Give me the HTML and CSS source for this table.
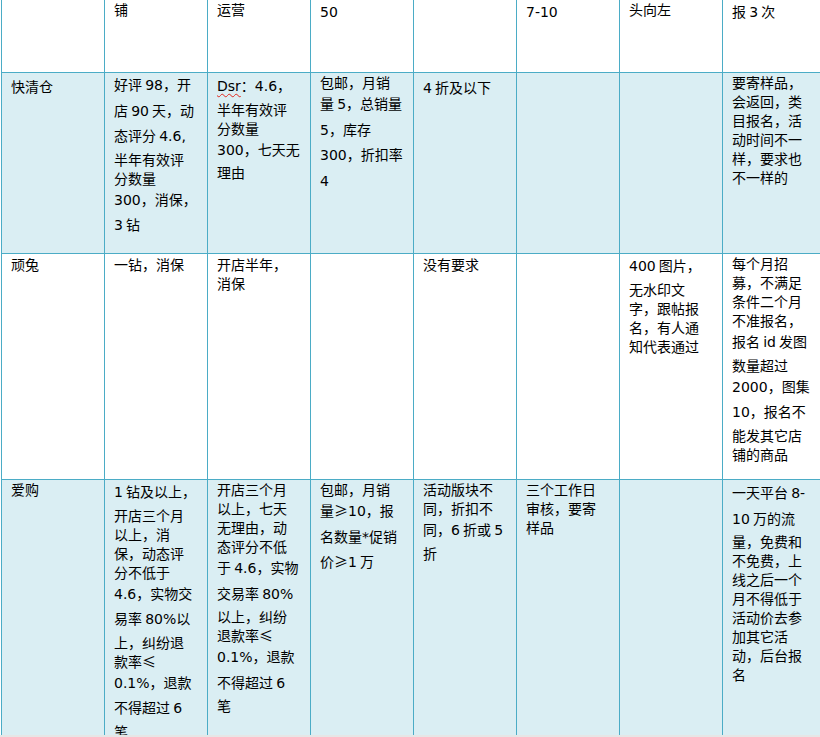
FILE: index.html
```html
<!DOCTYPE html>
<html lang="zh-CN">
<head>
<meta charset="utf-8">
<title>活动报名要求</title>
<link rel="stylesheet" href="styles.css">
</head>
<body>
<div class="page">
  <div class="sheet">
    <div class="row">
      <div class="cell"></div>
      <div class="cell">铺</div>
      <div class="cell">运营</div>
      <div class="cell"><span class="n">50</span></div>
      <div class="cell"></div>
      <div class="cell"><span class="n">7-10</span></div>
      <div class="cell">头向左</div>
      <div class="cell">报 <span class="n">3</span> 次</div>
    </div>
    <div class="row shade">
      <div class="cell pt4">快清仓</div>
      <div class="cell">好评 <span class="n">98</span>，开<br>店 <span class="n">90</span> 天，动<br>态评分 <span class="n">4.6,</span><br>半年有效评<br>分数量<br><span class="n">300</span>，消保，<br><span class="n">3</span> 钻</div>
      <div class="cell pt1"><span class="n spell">Dsr</span>：<span class="n">4.6</span>，<br>半年有效评<br>分数量<br><span class="n">300</span>，七天无<br>理由</div>
      <div class="cell">包邮，月销<br>量 <span class="n">5</span>，总销量<br><span class="n">5</span>，库存<br><span class="n">300</span>，折扣率<br><span class="n">4</span></div>
      <div class="cell pt3"><span class="n">4</span> 折及以下</div>
      <div class="cell"></div>
      <div class="cell"></div>
      <div class="cell">要寄样品，<br>会返回，类<br>目报名，活<br>动时间不一<br>样，要求也<br>不一样的</div>
    </div>
    <div class="row">
      <div class="cell pt1">顽兔</div>
      <div class="cell pt1">一钻，消保</div>
      <div class="cell pt1">开店半年，<br>消保</div>
      <div class="cell"></div>
      <div class="cell pt1">没有要求</div>
      <div class="cell"></div>
      <div class="cell"><span class="n">400</span> 图片，<br>无水印文<br>字，跟帖报<br>名，有人通<br>知代表通过</div>
      <div class="cell">每个月招<br>募，不满足<br>条件二个月<br>不准报名，<br>报名 <span class="n">id</span> 发图<br>数量超过<br><span class="n">2000</span>，图集<br><span class="n">10</span>，报名不<br>能发其它店<br>铺的商品</div>
    </div>
    <div class="row shade">
      <div class="cell">爱购</div>
      <div class="cell"><span class="n">1</span> 钻及以上，<br>开店三个月<br>以上，消<br>保，动态评<br>分不低于<br><span class="n">4.6</span>，实物交<br>易率 <span class="n">80%</span>以<br>上，纠纷退<br>款率≤<br><span class="n">0.1%</span>，退款<br>不得超过 <span class="n">6</span><br>笔</div>
      <div class="cell">开店三个月<br>以上，七天<br>无理由，动<br>态评分不低<br>于 <span class="n">4.6</span>，实物<br>交易率 <span class="n">80%</span><br>以上，纠纷<br>退款率≤<br><span class="n">0.1%</span>，退款<br>不得超过 <span class="n">6</span><br>笔</div>
      <div class="cell">包邮，月销<br>量≥<span class="n">10</span>，报<br>名数量<span class="n">*</span>促销<br>价≥<span class="n">1</span> 万</div>
      <div class="cell">活动版块不<br>同，折扣不<br>同，<span class="n">6</span> 折或 <span class="n">5</span><br>折</div>
      <div class="cell">三个工作日<br>审核，要寄<br>样品</div>
      <div class="cell"></div>
      <div class="cell pt1">一天平台 <span class="n">8-</span><br><span class="n">10</span> 万的流<br>量，免费和<br>不免费，上<br>线之后一个<br>月不得低于<br>活动价去参<br>加其它活<br>动，后台报<br>名</div>
    </div>
  </div>
</div>
</body>
</html>
```

FILE: styles.css
```css
* {
  box-sizing: border-box;
}

html,
body {
  margin: 0;
  overflow: hidden;
}

body {
  background: #e6e6e6;
  font-family: "Noto Sans CJK SC", sans-serif;
  font-size: 14px;
  color: #000;
}

.page {
  height: 735px;
  overflow: hidden;
  background: #fff;
}

.sheet {
  display: grid;
  grid-template-columns: 104px repeat(7, 103px);
  grid-template-rows: 73px 181px 226px 260px;
  width: 825px;
  margin-left: 1px;
}

.row {
  display: contents;
}

.cell {
  border-right: 1px solid #4bacc6;
  border-bottom: 1px solid #4bacc6;
  padding: 0 2px 0 9px;
  line-height: 19px;
  white-space: nowrap;
}

.cell:first-child {
  border-left: 1px solid #4bacc6;
}

.row.shade .cell {
  background: #daeef3;
}

.n {
  font-family: "DejaVu Sans", sans-serif;
  line-height: 25.5px;
}

.spell {
  text-decoration: underline wavy #e0281e;
  text-decoration-thickness: 1px;
  text-underline-offset: 2px;
}

.pt1 {
  padding-top: 1px;
}

.pt3 {
  padding-top: 3px;
}

.pt4 {
  padding-top: 4px;
}
```
